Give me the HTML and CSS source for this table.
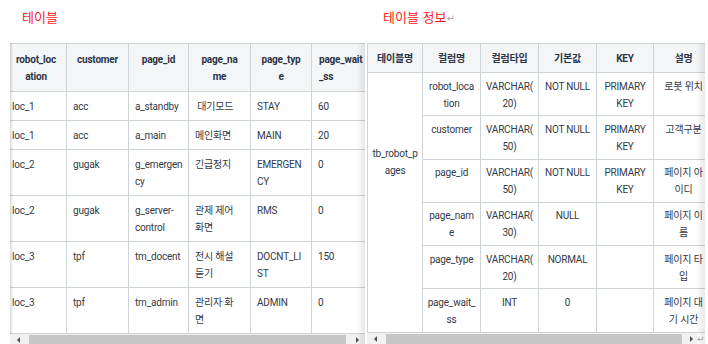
FILE: index.html
```html
<!DOCTYPE html>
<html lang="ko">
<head>
<meta charset="utf-8">
<title>테이블</title>
<link rel="stylesheet" href="styles.css">
</head>
<body>
<div class="page">
  <section class="panel panel-left">
    <h2 class="title title-left">테이블</h2>
    <div class="table-wrap">
      <div class="table-clip">
        <table class="grid grid-left">
          <colgroup>
            <col class="c61"><col class="c62"><col class="c60"><col class="c62"><col class="c61"><col class="c61">
          </colgroup>
          <thead>
            <tr><th>robot_loc<br>ation</th><th>customer</th><th>page_id</th><th>page_na<br>me</th><th>page_typ<br>e</th><th class="th-left">page_wait<br>_ss</th></tr>
          </thead>
          <tbody>
            <tr><td>loc_1</td><td>acc</td><td>a_standby</td><td>&nbsp;대기모드</td><td>STAY</td><td>60</td></tr>
            <tr><td>loc_1</td><td>acc</td><td>a_main</td><td>메인화면</td><td>MAIN</td><td>20</td></tr>
            <tr><td>loc_2</td><td>gugak</td><td>g_emergen<br>cy</td><td>긴급정지</td><td>EMERGEN<br>CY</td><td>0</td></tr>
            <tr><td>loc_2</td><td>gugak</td><td>g_server-<br>control</td><td>관제 제어<br>화면</td><td>RMS</td><td>0</td></tr>
            <tr><td>loc_3</td><td>tpf</td><td>tm_docent</td><td>전시 해설<br>듣기</td><td>DOCNT_LI<br>ST</td><td>150</td></tr>
            <tr><td>loc_3</td><td>tpf</td><td>tm_admin</td><td>관리자 화<br>면</td><td>ADMIN</td><td>0</td></tr>
          </tbody>
        </table>
      </div>
      <div class="scrollbar scrollbar-left">
        <span class="arrow arrow-l"></span><span class="thumb"></span><span class="arrow arrow-r"></span>
      </div>
    </div>
  </section>

  <section class="panel panel-right">
    <h2 class="title title-right">테이블 정보<span class="mark">↵</span></h2>
    <div class="table-wrap">
      <div class="table-clip">
        <table class="grid grid-right">
          <colgroup>
            <col class="c55"><col class="c58"><col class="c58"><col class="c58"><col class="c57"><col class="c60">
          </colgroup>
          <thead>
            <tr><th>테이블명</th><th>컬럼명</th><th>컬럼타입</th><th>기본값</th><th>KEY</th><th>설명</th></tr>
          </thead>
          <tbody>
            <tr><td rowspan="6" class="table-name">tb_robot_p<br>ages</td><td>robot_loca<br>tion</td><td>VARCHAR(<br>20)</td><td>NOT NULL</td><td>PRIMARY<br>KEY</td><td>로봇 위치</td></tr>
            <tr><td>customer</td><td>VARCHAR(<br>50)</td><td>NOT NULL</td><td>PRIMARY<br>KEY</td><td>고객구분</td></tr>
            <tr><td>page_id</td><td>VARCHAR(<br>50)</td><td>NOT NULL</td><td>PRIMARY<br>KEY</td><td>페이지 아<br>이디</td></tr>
            <tr><td>page_nam<br>e</td><td>VARCHAR(<br>30)</td><td>NULL</td><td></td><td>페이지 이<br>름</td></tr>
            <tr><td>page_type</td><td>VARCHAR(<br>20)</td><td>NORMAL</td><td></td><td>페이지 타<br>입</td></tr>
            <tr><td>page_wait_<br>ss</td><td>INT</td><td>0</td><td></td><td>페이지 대<br>기 시간</td></tr>
          </tbody>
        </table>
      </div>
      <div class="scrollbar scrollbar-right">
        <span class="arrow arrow-l"></span><span class="thumb"></span><span class="arrow arrow-r"></span><span class="mark mark-end">↵</span>
      </div>
    </div>
  </section>
</div>
</body>
</html>
```

FILE: styles.css
```css
html, body {
  margin: 0;
  padding: 0;
  background: #ffffff;
}

body {
  width: 708px;
  height: 344px;
  overflow: hidden;
  font-family: Roboto, "Noto Sans CJK KR", sans-serif;
  font-size: 10px;
  line-height: 17px;
  color: #333a47;
}

.page {
  display: flex;
  gap: 2px;
  padding-left: 10px;
}

.panel {
  display: flex;
  flex-direction: column;
}

.panel-left { width: 355px; }
.panel-right { width: 338px; }

.title {
  margin: 0;
  height: 43px;
  box-sizing: border-box;
  padding-top: 7px;
  font-family: "Noto Sans CJK KR", sans-serif;
  font-size: 13px;
  line-height: 20px;
  font-weight: 400;
  color: #ff1a1a;
  white-space: nowrap;
}

.title-left { padding-left: 12px; }
.title-right { padding-left: 16px; }

.mark {
  color: #a8a8a8;
  font-size: 10px;
  font-family: "DejaVu Sans", sans-serif;
}

.table-wrap {
  position: relative;
}

.table-clip {
  overflow: hidden;
}

.table-wrap::after {
  content: "";
  position: absolute;
  top: 0;
  right: 0;
  bottom: 0;
  width: 9px;
  background: linear-gradient(to right, rgba(0, 0, 0, 0), rgba(0, 0, 0, 0.09));
  pointer-events: none;
}

.panel-left .table-wrap::before {
  content: "";
  position: absolute;
  top: 0;
  left: 0;
  bottom: 12px;
  width: 3px;
  background: linear-gradient(to right, rgba(0, 0, 0, 0.16), rgba(0, 0, 0, 0));
  pointer-events: none;
  z-index: 1;
}

.grid {
  border-collapse: collapse;
  table-layout: fixed;
  letter-spacing: -0.2px;
}

.grid-left {
  width: 367px;
  margin-left: -5px;
}

.grid-right {
  width: 346px;
}

.c55 { width: 55px; }
.c57 { width: 57px; }
.c58 { width: 58px; }
.c60 { width: 60px; }
.c61 { width: 61px; }
.c62 { width: 62px; }

.grid th,
.grid td {
  border: 1px solid #cfd3da;
  vertical-align: top;
  white-space: nowrap;
  overflow: hidden;
}

.grid th {
  background: #f4f5f7;
  font-weight: 700;
  text-align: center;
  color: #2a3548;
}

.grid-left th {
  padding: 7px 4px 6px;
}

.grid-left th.th-left {
  text-align: left;
  padding-left: 7px;
}

.grid-left td {
  padding: 6px 6px 5px;
  text-align: left;
}

.grid-right th {
  padding: 6px 4px 5px;
}

.grid-right td {
  padding: 4.5px 4px 3.8px;
  text-align: center;
}

.grid-right td.table-name {
  padding: 72px 0 0;
  overflow: visible;
}

.scrollbar {
  display: flex;
  align-items: center;
  height: 12px;
  background: #f1f1f1;
}

.thumb {
  flex: 1;
  height: 10px;
  margin: 0 3px;
  background: #c6c6c6;
}

.arrow {
  width: 16px;
  height: 12px;
  display: flex;
  align-items: center;
  justify-content: center;
}

.arrow::before {
  content: "";
  border-top: 3px solid transparent;
  border-bottom: 3px solid transparent;
}

.arrow-l::before { border-right: 3px solid #505050; }
.arrow-r::before { border-left: 3px solid #505050; }

.scrollbar-right .arrow-r { width: 12px; }

.mark-end {
  width: 8px;
  background: #ffffff;
  line-height: 12px;
  font-size: 9px;
}
```
